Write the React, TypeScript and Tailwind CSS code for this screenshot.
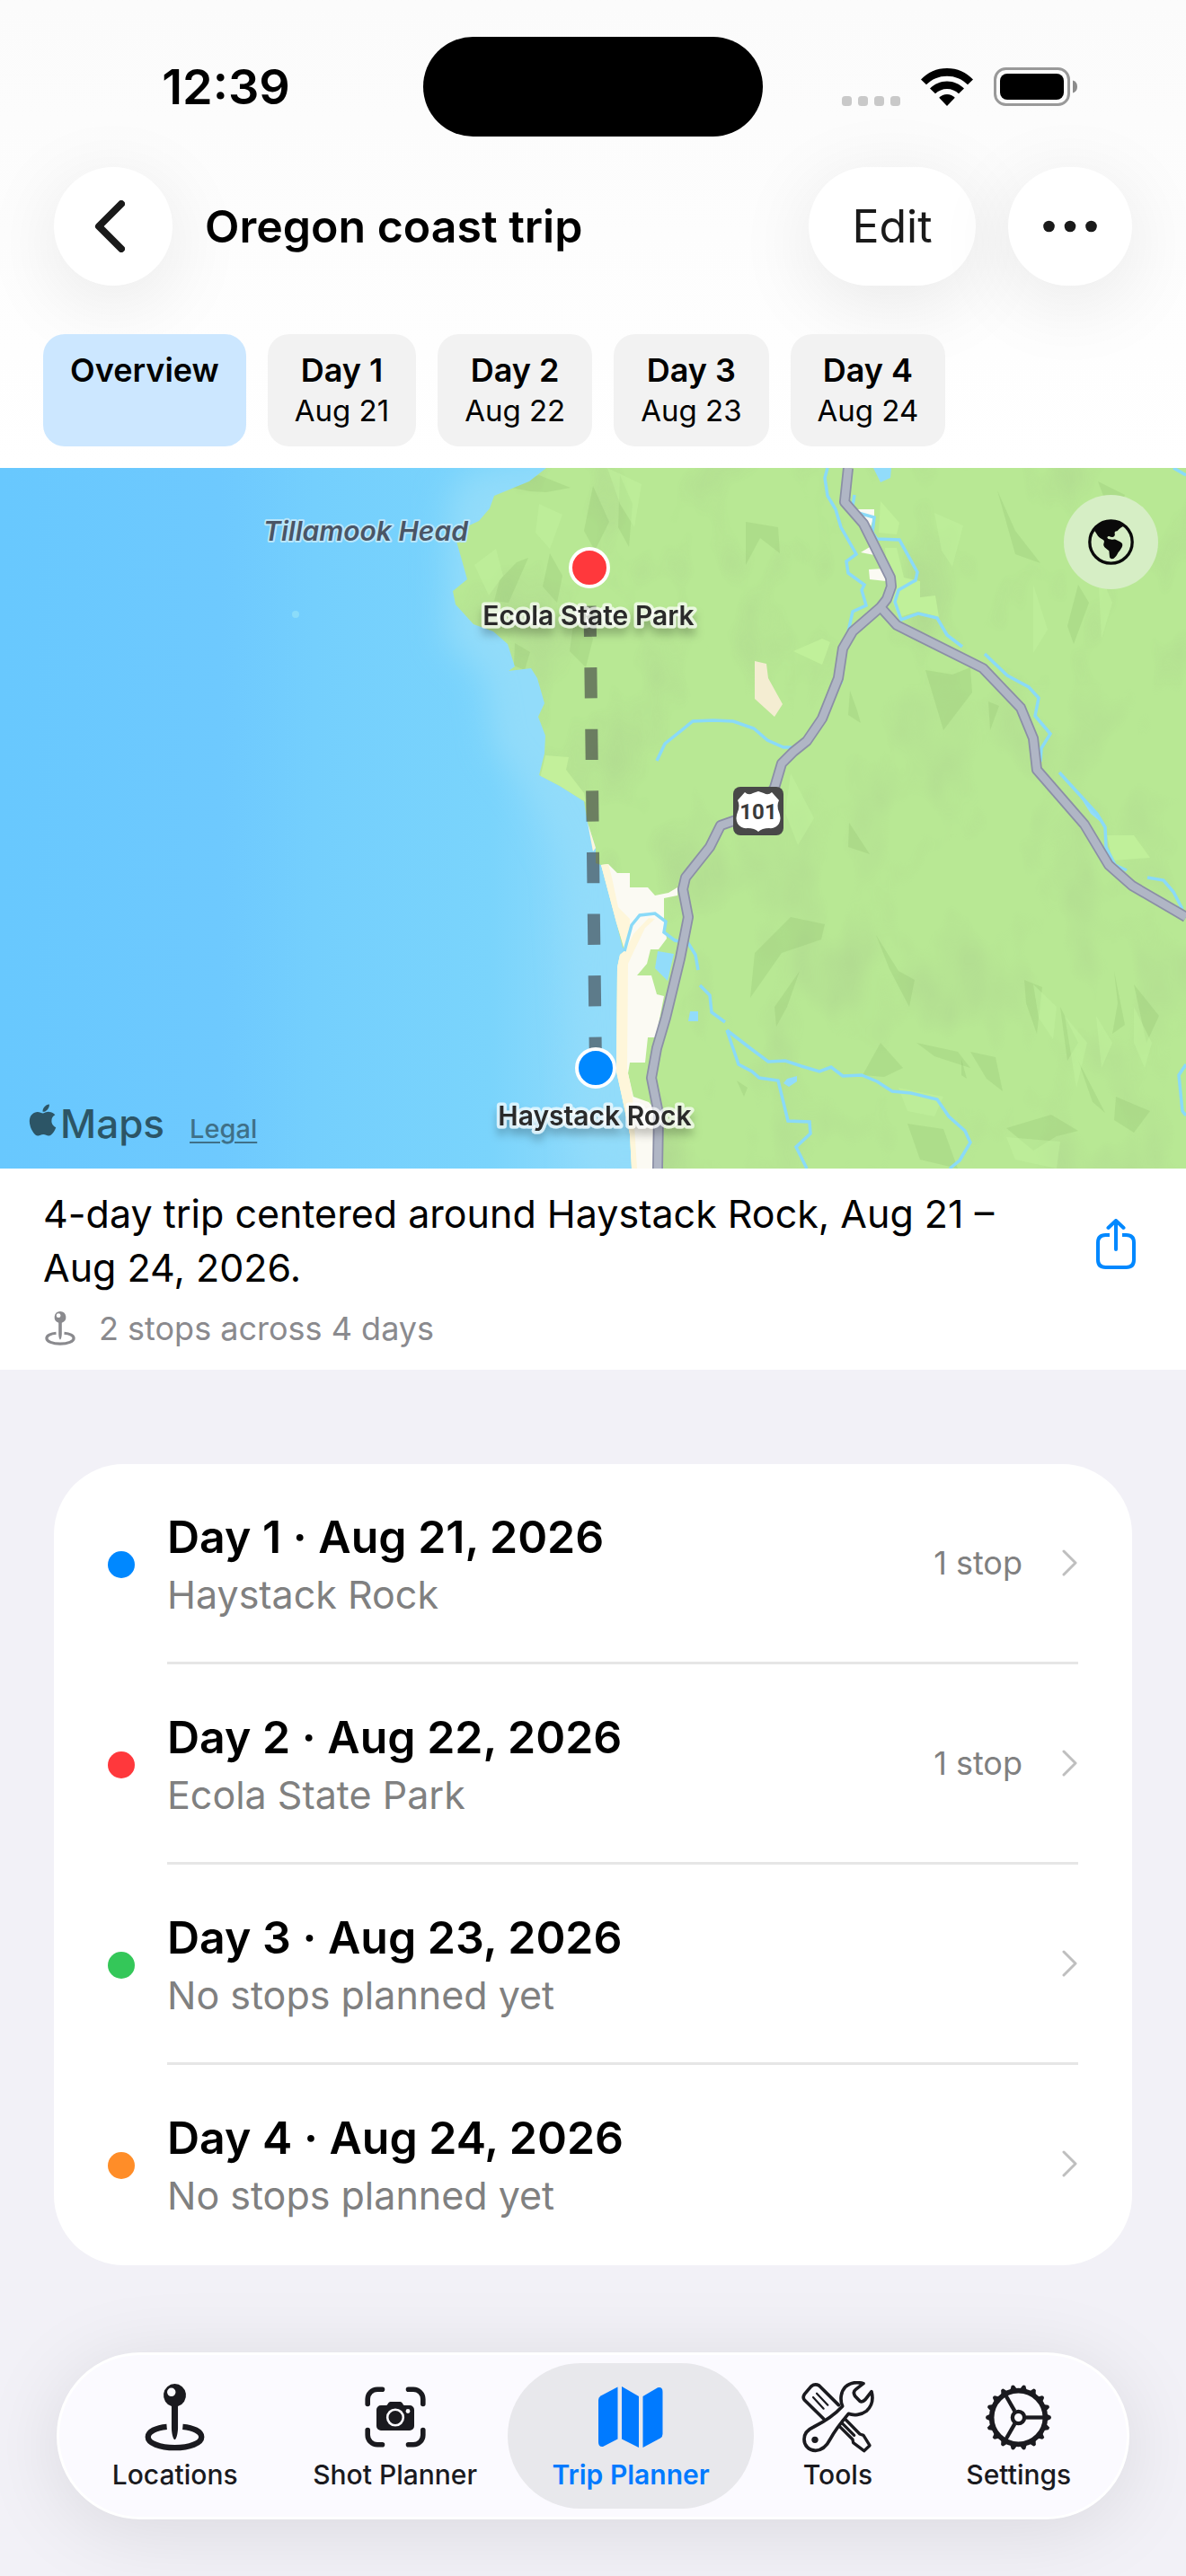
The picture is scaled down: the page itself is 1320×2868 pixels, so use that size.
import { useState } from 'react';
import type { ReactNode } from 'react';
import { FaApple } from 'react-icons/fa';

const days = [
  { id: 1, short: 'Aug 21', long: 'Aug 21, 2026', place: 'Haystack Rock', stops: '1 stop', dot: 'bg-[#0088ff]' },
  { id: 2, short: 'Aug 22', long: 'Aug 22, 2026', place: 'Ecola State Park', stops: '1 stop', dot: 'bg-[#ff383c]' },
  { id: 3, short: 'Aug 23', long: 'Aug 23, 2026', place: 'No stops planned yet', stops: '', dot: 'bg-[#34c759]' },
  { id: 4, short: 'Aug 24', long: 'Aug 24, 2026', place: 'No stops planned yet', stops: '', dot: 'bg-[#ff8d28]' },
];

function PinIcon({ className }: { className: string }) {
  return (
    <svg viewBox="0 0 68 76" className={className} fill="none" aria-hidden="true">
      <path fillRule="evenodd" clipRule="evenodd" d="M34 0a13 13 0 0 1 3.600 25.400V50c0 5-1.600 13-3.600 13s-3.600-8-3.600-13V25.400A13 13 0 0 1 34 0Zm-3.800 4.600a4.800 4.800 0 1 0 0 9.600a4.800 4.800 0 0 0 0-9.600Z" fill="currentColor" />
      <path d="M25 48.500C13 49.500 3.800 54 3.800 60C3.800 67 17 72.200 34 72.200S64.200 67 64.200 60C64.200 54 55 49.500 43 48.500" stroke="currentColor" strokeWidth="6.400" />
    </svg>
  );
}

function ViewfinderIcon() {
  return (
    <svg viewBox="0 0 68 68" className="h-[68px] w-[68px]" fill="none" aria-hidden="true">
      <path d="M19.500 3.200H14A10.800 10.800 0 0 0 3.200 14V19.500M48.500 3.200H54A10.800 10.800 0 0 1 64.800 14V19.500M3.200 48.500V54A10.800 10.800 0 0 0 14 64.800H19.500M64.800 48.500V54A10.800 10.800 0 0 1 54 64.800H48.500" stroke="currentColor" strokeWidth="5.600" strokeLinecap="round" />
      <path d="M18 21H24C25.500 21 26 17 28.500 17H39.500C42 17 42.500 21 44 21H50A5 5 0 0 1 55 26V44A5 5 0 0 1 50 49H18A5 5 0 0 1 13 44V26A5 5 0 0 1 18 21Z" fill="currentColor" />
      <circle cx="34" cy="34.500" r="8.800" stroke="#fbfaff" strokeWidth="2.600" />
      <circle cx="48" cy="27.500" r="2.400" fill="#fbfaff" />
    </svg>
  );
}

function MapIcon() {
  return (
    <svg viewBox="0 0 72 68" className="h-[68px] w-[72px]" fill="currentColor" aria-hidden="true">
      <path d="M21.500 0.500V58.500L5 67Q0 67.500 0 62V15Q0 12 2.500 10.500Z" />
      <path d="M26 0L45 11V68L26 58.500Z" />
      <path d="M49.500 11L66 1.200Q71.500 0 71.500 6V53Q71.500 56 69 57.500L49.500 68Z" />
    </svg>
  );
}

function ToolsIcon() {
  return (
    <svg viewBox="33 36 243 240" className="h-20 w-[81px]" fill="none" stroke="currentColor" strokeWidth="11" strokeLinejoin="round" strokeLinecap="round" aria-hidden="true">
      <path d="M107 162L43 99Q36 91 43 80L66 53Q78 44 92 51L157 116" />
      <path d="M72 90L107 128M84 77L121 116" strokeWidth="6.500" />
      <path d="M160 187L204 231L206 242L242 269L261 251L240 217L228 213L181 165M168 176L209 217" strokeWidth="10" />
      <path d="M190 145C168 171 146 198 129 230C119 250 106 267 80 268C56 267 42 250 42 230C42 210 56 197 74 189C112 170 140 153 170 120C161 98 164 72 180 55C195 42 218 38 240 44L214 64C206 70 207 78 212 86L228 103C235 107 241 103 246 98L267 71C274 98 267 121 250 136C233 149 208 152 190 145Z" />
      <circle cx="78" cy="232" r="11" fill="currentColor" stroke="none" />
    </svg>
  );
}

const teeth = Array.from({ length: 18 }, (_, i) => i * 20);

function GearIcon() {
  return (
    <svg viewBox="-113 -112 226 224" className="h-[75px] w-[75px]" fill="none" stroke="currentColor" aria-hidden="true">
      <circle r="90" strokeWidth="17" />
      <circle r="20" strokeWidth="13" />
      {teeth.map((deg) => (
        <path key={deg} d="M94 -12L108 -5Q112 0 108 5L94 12Z" fill="currentColor" stroke="none" transform={`rotate(${deg})`} />
      ))}
      {[0, 120, 240].map((deg) => (
        <path key={deg} d="M25 0H86" strokeWidth="13" transform={`rotate(${deg})`} />
      ))}
    </svg>
  );
}

function GlobeIcon() {
  return (
    <svg viewBox="93 99 153 153" className="h-[51px] w-[51px]" aria-hidden="true">
      <circle cx="169.500" cy="175.500" r="71" fill="none" stroke="#0a0a0a" strokeWidth="10" />
      <path d="M114 138C126 114 148 102 170 102C186 102 201 108 212 122L206 125C198 130 193 136 190 139C183 139 181 143 182 147C184 153 181 158 175 159L168 158C164 154 158 156 157 160C158 165 163 166 166 166C172 169 178 165 185 167L199 174C208 178 210 184 206 193L199 204C194 208 192 215 187 222L179 230C172 233 166 231 165 225L163 205C155 199 147 194 145 187C143 181 149 175 146 170C140 165 131 161 126 155C121 149 119 142 114 138Z" fill="#0a0a0a" />
    </svg>
  );
}

const land =
  'M608 0L589 15L550 31L545 45L533 59L518 66L507 78L513 99L520 124L504 137L507 152L527 174L549 182L565 196L573 221L566 226L591 223L598 234L606 262L599 277L607 298L606 318L600 342L623 354L650 371L654 395L663 423L663 440L669 442L686 506L693 534L696 537L690 542L687 556L686 672L692 699L701 742L703 780H1320V0Z';

const streams = [
  'M921 0L918 11L921 31L930 46L936 66L953 96L942 104L944 117L962 130L959 136L964 153L949 160L944 182L940 210L936 240',
  'M951 30L948 48L973 55L971 72L976 79L1001 80L1021 116L1019 125L1000 136L996 149L1003 169L1022 162L1043 167L1054 186L1071 199',
  'M1096 207L1121 231L1145 244L1156 256L1152 276L1169 296L1159 312L1158 327',
  'M1179 339L1199 361L1221 385L1230 400L1231 422L1241 442L1254 448',
  'M1277 456L1295 459L1306 472L1316 491',
  'M731 326L740 307L771 282L794 281L816 282L839 290L854 303L872 311L881 311',
  'M695 538L703 509L712 498L729 496L741 505L739 517L751 526L766 529L774 542L777 559M779 576L790 587L792 606L807 617',
  'M809 626L835 646L855 661L874 660L892 666L912 672L925 667L938 677L959 676L976 683L993 694L1014 696L1043 703L1056 722L1074 738L1080 751L1068 771L1057 780',
  'M809 626L822 664L837 672L845 679L866 682L877 727L901 728L902 741L886 756L898 780',
  'M1320 664L1312 676L1316 716L1320 721',
  'M1306 0L1320 8',
];

const roads = [
  'M980 155L998 175L1094 223L1136 267L1150 301L1154 336L1207 397L1234 442L1260 465L1320 500',
  'M944 0L940 38L961 62L991 122L992 132L987 146L980 155L949 182L938 201L933 234L915 279L898 304L883 316L870 329L862 356L842 384L802 398L790 422L763 456L760 469L766 500L757 546L741 612L731 646L725 679L733 719L732 780',
];

/* darker hillsides */
const slopes = [
  'M560 20L600 8L635 22L608 27L590 26Z',
  'M575 105L588 100L566 150L550 148L556 125Z',
  'M573 195L590 205L584 225L572 220Z',
  'M660 20L678 60L662 92L650 70Z',
  'M690 8L704 40L700 88L688 66Z',
  'M612 95L626 120L620 150L604 132Z',
  'M640 160L660 190L652 222L634 204Z',
  'M830 60L866 66L868 95L846 78L830 108Z',
  'M1110 25L1130 70L1158 106L1130 96Z',
  'M1222 15L1252 30L1248 40L1230 36Z',
  'M1200 130L1212 150L1195 196L1188 176Z',
  'M1030 225L1060 230L1080 222L1082 250L1050 292Z',
  'M946 248L954 270L958 284L944 275Z',
  'M1100 260L1112 265L1102 292Z',
  'M945 395L968 430L944 422Z',
  'M975 520L1000 560L1018 570L1012 600L990 558Z',
  'M840 540L880 500L918 508L914 525L870 540L835 590Z',
  'M890 560L876 600L864 622L862 600Z',
  'M1140 570L1160 578L1154 630L1142 596Z',
  'M1180 600L1200 640L1188 660Z',
  'M1240 560L1252 620L1238 630L1244 596Z',
  'M1262 575L1290 610L1276 640Z',
  'M1080 650L1108 656L1116 694L1098 680Z',
  'M1120 735L1170 720L1200 738L1176 744L1150 760Z',
  'M1200 660L1230 718L1216 706Z',
  'M1020 640L1066 650L1080 668L1040 655Z',
  'M980 640L1005 668L984 678L960 676Z',
  'M1010 730L1050 736L1066 780L1024 770Z',
  'M1242 700L1280 716L1262 740L1240 726Z',
  'M820 682L832 690L828 700Z',
  'M1070 658L1076 680L1070 676Z',
];

/* lit hillsides */
const crests = [
  'M676 0L714 18L706 66L690 40Z',
  'M528 108L552 90L560 120L544 142Z',
  'M600 40L626 52L612 90L596 72Z',
  'M1040 50L1072 64L1060 110L1048 92Z',
  'M1150 130L1166 180L1150 206Z',
  'M1222 112L1238 150L1226 190Z',
  'M880 340L906 390L888 420L874 384Z',
  'M1150 575L1176 600L1172 636L1156 612Z',
  'M1185 610L1210 640L1198 690Z',
  'M1262 600L1282 640L1274 668L1262 640Z',
  'M1220 610L1238 640L1226 668Z',
  'M1120 745L1180 750L1176 780L1130 770Z',
  'M1000 690L1050 700L1040 722L1010 716Z',
];

function TripMap() {
  return (
    <svg viewBox="0 0 1320 780" preserveAspectRatio="xMidYMid slice" className="block h-[780px] w-full font-['Inter',sans-serif]" role="img" aria-label="Map of the trip route">
      <defs>
        <linearGradient id="sea" x1="0" y1="0" x2="700" y2="0" gradientUnits="userSpaceOnUse">
          <stop offset="0" stopColor="#68c8fe" />
          <stop offset="0.350" stopColor="#6ec9fe" />
          <stop offset="0.500" stopColor="#74cffd" />
          <stop offset="0.780" stopColor="#7ad4fc" />
          <stop offset="0.950" stopColor="#90dbfb" />
        </linearGradient>
        <clipPath id="landClip">
          <path d={land} />
        </clipPath>
        <filter id="soft" x="-20%" y="-20%" width="140%" height="140%">
          <feGaussianBlur stdDeviation="18" />
        </filter>
        <filter id="relief" x="0" y="0" width="100%" height="100%">
          <feTurbulence type="fractalNoise" baseFrequency="0.013 0.008" numOctaves="3" seed="8" />
          <feColorMatrix type="matrix" values="0 0 0 0 0.350  0 0 0 0 0.480  0 0 0 0 0.250  2.200 0 0 0 -1.080" />
        </filter>
        <filter id="labelShadow" x="-10%" y="-40%" width="120%" height="220%">
          <feDropShadow dx="0" dy="8" stdDeviation="5" floodColor="#000" floodOpacity="0.250" />
        </filter>
      </defs>

      <rect width="1320" height="780" fill="url(#sea)" />
      <path d="M530 0L500 30L496 190L540 235L550 310L590 360L630 440L650 780H760V0Z" fill="#92dcfa" filter="url(#soft)" />
      <circle cx="329" cy="163" r="4" fill="#8bdcfa" />

      {/* Land */}
      <path d={land} fill="#b8e894" />
      <g clipPath="url(#landClip)">
        <rect x="500" width="820" height="780" filter="url(#relief)" opacity="0.300" />
        {slopes.map((d) => (
          <path key={d} d={d} fill="#87b568" opacity="0.220" />
        ))}
        {crests.map((d) => (
          <path key={d} d={d} fill="#c3f3a0" opacity="0.450" />
        ))}
        <path d="M607 320L633 322L630 336L650 362L652 372L600 350Z" fill="#c3f09b" />
        <path d="M980 37L1001 61L998 74L978 72ZM985 89L998 89L1006 122L1024 126L1024 144L1041 142L1045 166L1022 160L1000 166L990 140ZM1232 409L1262 409L1280 434L1238 437ZM883 204L915 190L924 194L915 219Z" fill="#c0f09a" />
        <path d="M840 215L853 218L855 234L871 263L862 277L840 257Z" fill="#f4edd2" />
        <path d="M954 46L973 46L973 54L968 68ZM967 113L983 112L986 126L968 124ZM958 94L968 88L973 97Z" fill="#fbfaf3" />
      </g>

      {/* Town and beach */}
      <path d="M669 442L677 441L687 451H701V467H721L729 476L744 473L754 467V476L739 479V502L742 524L733 536H724L720 552L709 565H725L731 586L739 588L730 634H721L718 662H701L699 674L705 700L722 706L729 714V780H703L701 742L692 699L686 672L687 556L690 542L696 537L686 506Z" fill="#fbfaf3" />
      <path d="M669 442L677 441L681 456L688 489L701 502V522L695 537L686 506ZM696 537L705 519L722 501L729 502L718 512L705 539L699 552L698 669L704 699L709 780H703L701 742L692 699L686 672L687 556L690 542ZM654 395L663 423L660 427Z" fill="#fef6da" />
      <path d="M732 538L750 541L743 571L729 557ZM768 605H777V616H766ZM876 680L887 677V683L878 689L872 685ZM972 0H992L991 11L980 16ZM1199 361L1224 388L1232 400L1214 385Z" fill="#92dcfa" />
      <g fill="none" stroke="#8adaf8" strokeWidth="3.500">
        {streams.map((d) => (
          <path key={d} d={d} />
        ))}
      </g>

      {/* Roads */}
      <g fill="none" strokeLinejoin="round">
        {roads.map((d) => (
          <path key={d} d={d} stroke="#8b8fa6" strokeWidth="12" />
        ))}
        {roads.map((d) => (
          <path key={d} d={d} stroke="#b0b6c5" strokeWidth="8.500" />
        ))}
      </g>

      {/* Route shield */}
      <rect x="816" y="355" width="56" height="54" rx="8" fill="#484848" />
      <path d="M829 361Q833 365 838 362L844 360L850 362Q855 365 859 361L867 370Q864 376 867 383Q870 390 867 396Q863 402 856 401Q848 401 844 405Q840 401 832 401Q825 402 821 396Q818 390 821 383Q824 376 821 370Z" fill="#fff" />
      <text x="844" y="391" textAnchor="middle" className="fill-[#3a3a3a] font-['Liberation_Sans_Narrow','Roboto',sans-serif] text-[24px] font-bold">101</text>

      {/* Route */}
      <path d="M663 668L656 111" stroke="#3a3a40" strokeOpacity="0.600" strokeWidth="14" strokeDasharray="34.300 34.300" />
      <circle cx="656" cy="111" r="21" fill="#ff383c" stroke="#fff" strokeWidth="4" />
      <circle cx="663" cy="668" r="21" fill="#0088ff" stroke="#fff" strokeWidth="4" />

      <g textAnchor="middle" strokeLinejoin="round" paintOrder="stroke">
        <text x="407" y="81" stroke="#b9e6fb" strokeWidth="4" className="fill-[#4a5566] text-[30px] font-semibold italic">Tillamook Head</text>
        <g stroke="#fff" strokeOpacity="0.700" strokeWidth="7" filter="url(#labelShadow)">
          <text x="655" y="175" className="fill-[#2c2c2c] text-[30px] font-semibold">Ecola State Park</text>
          <text x="662" y="732" className="fill-[#2c2c2c] text-[30px] font-semibold">Haystack Rock</text>
        </g>
      </g>
    </svg>
  );
}

function StatusBar() {
  return (
    <div className="grid grid-cols-[1fr_378px_1fr] pt-[41px]">
      <div className="flex items-center justify-center pl-8 text-[54px] leading-[60px] font-semibold">12:39</div>
      <div className="h-[111px] rounded-full bg-black" />
      <div className="flex items-center justify-center gap-[23px] pr-8">
        <svg viewBox="0 0 65 42" className="h-[42px] w-[65px] fill-[#c9c9c9]" aria-hidden="true">
          {[0, 18, 36, 54].map((x) => (
            <rect key={x} x={x} y="31" width="11" height="11" rx="3.500" />
          ))}
        </svg>
        <svg viewBox="0 0 58 42" className="h-[42px] w-[58px]" aria-hidden="true">
          <path d="M29 0C40.500 0 50.500 4.500 58 12.500L52 18.300C46 12 38 8.700 29 8.700S12 12 6 18.300L0 12.500C7.500 4.500 17.500 0 29 0Z" />
          <path d="M29 14.500C36.500 14.500 43 17.500 48 22.600L42 28.300C38.500 25 34 23 29 23S19.500 25 16 28.300L10 22.600C15 17.500 21.500 14.500 29 14.500Z" />
          <path d="M29 29C32.500 29 35.500 30.300 37.800 32.800L29 42L20.200 32.800C22.500 30.300 25.500 29 29 29Z" />
        </svg>
        <svg viewBox="0 0 94 43" className="h-[43px] w-[94px]" aria-hidden="true">
          <rect x="1.500" y="1.500" width="82" height="40" rx="12" fill="none" stroke="#999" strokeWidth="3" />
          <rect x="7" y="7" width="71" height="29" rx="8" />
          <path d="M88 14.500Q93 16 93 21.500T88 28.500Z" fill="#8c8c8c" />
        </svg>
      </div>
    </div>
  );
}

function TabLink({ label, active, children }: { label: string; active?: boolean; children: ReactNode }) {
  return (
    <a
      href="#"
      aria-current={active ? 'page' : undefined}
      className={`flex flex-col items-center rounded-full py-5 ${active ? 'bg-[#e8e8ec] font-semibold text-[#007aff]' : 'font-medium'}`}
    >
      <span className="flex h-20 items-center">{children}</span>
      <span className="mt-1.5 text-[30px] leading-[36px] whitespace-nowrap">{label}</span>
    </a>
  );
}

export default function App() {
  const [selected, setSelected] = useState(0);

  return (
    <div className="flex min-h-screen flex-col bg-[#f2f1f7] font-['Inter',sans-serif] text-black">
      {/* Header */}
      <header className="bg-linear-to-b from-[#fbfbfb] to-white pb-6">
        <StatusBar />
        <div className="mt-[34px] flex items-center px-[60px]">
          <button type="button" aria-label="Back" className="flex h-[132px] w-[132px] items-center justify-center rounded-full bg-white shadow-[0_18px_90px_rgba(0,0,0,0.09)]">
            <svg viewBox="0 0 34 58" className="mr-2 h-[58px] w-[34px]" fill="none" stroke="#1a1a1a" strokeWidth="8" strokeLinecap="round" strokeLinejoin="round" aria-hidden="true">
              <path d="M30 4L5 29L30 54" />
            </svg>
          </button>
          <h1 className="ml-9 flex-1 text-[50px] leading-[60px] font-semibold">Oregon coast trip</h1>
          <button type="button" className="h-[132px] w-[186px] rounded-full bg-white text-[50px] text-[#1a1a1a] shadow-[0_18px_90px_rgba(0,0,0,0.09)]">
            Edit
          </button>
          <button type="button" aria-label="More" className="ml-9 flex h-[132px] w-[138px] items-center justify-center rounded-full bg-white shadow-[0_18px_90px_rgba(0,0,0,0.09)]">
            <svg viewBox="0 0 60 14" className="h-[14px] w-[60px] fill-[#1a1a1a]" aria-hidden="true">
              <circle cx="6.500" cy="7" r="6.300" />
              <circle cx="30" cy="7" r="6.300" />
              <circle cx="53.500" cy="7" r="6.300" />
            </svg>
          </button>
        </div>

        {/* Day picker */}
        <div className="mt-[54px] flex gap-6 px-12">
          <button
            type="button"
            onClick={() => setSelected(0)}
            className={`flex flex-col rounded-3xl px-[30px] pt-4 pb-[18px] ${selected === 0 ? 'bg-[#cce7ff]' : 'bg-[#f2f2f2]'}`}
          >
            <span className="text-[36px] leading-[48px] font-semibold">Overview</span>
          </button>
          {days.map((day) => (
            <button
              key={day.id}
              type="button"
              onClick={() => setSelected(day.id)}
              className={`flex flex-col items-center rounded-3xl px-[30px] pt-4 pb-[18px] ${selected === day.id ? 'bg-[#cce7ff]' : 'bg-[#f2f2f2]'}`}
            >
              <span className="text-[36px] leading-[48px] font-semibold">Day {day.id}</span>
              <span className="text-[33px] leading-[43px]">{day.short}</span>
            </button>
          ))}
        </div>
      </header>

      {/* Map */}
      <section className="relative">
        <TripMap />
        <button type="button" aria-label="Change map style" className="absolute top-[30px] right-[31px] flex h-[105px] w-[105px] items-center justify-center rounded-full bg-[#d6eec5]">
          <GlobeIcon />
        </button>
        <div className="absolute bottom-5 left-8 flex items-baseline">
          <FaApple className="h-10 w-[31px] text-[#2c5566]" />
          <span className="ml-1 text-[44px] leading-[60px] font-medium text-[#2c5566]">Maps</span>
          <a href="#" className="ml-7 text-[29px] font-medium text-[#3f7088] underline decoration-2 underline-offset-4">
            Legal
          </a>
        </div>
      </section>

      {/* Summary */}
      <section className="flex items-start bg-white px-12 pt-5 pb-[22px]">
        <div className="flex-1">
          <p className="text-[43px] leading-[60px]">
            4-day trip centered around Haystack Rock, Aug 21 –<br />
            Aug 24, 2026.
          </p>
          <p className="mt-3.5 flex items-center gap-6 text-[36px] leading-[48px] text-[#8a8a8e]">
            <PinIcon className="h-[38px] w-[38px]" />
            2 stops across 4 days
          </p>
        </div>
        <button type="button" aria-label="Share" className="mt-9 mr-2 text-[#0088ff]">
          <svg viewBox="0 0 44 56" className="h-14 w-11" fill="none" stroke="currentColor" strokeWidth="4" strokeLinecap="round" strokeLinejoin="round" aria-hidden="true">
            <path d="M22 34V3M13.500 10L22 2L30.500 10" />
            <path d="M15 18H10.500Q2 18 2 26.500V45.500Q2 54 10.500 54H33.500Q42 54 42 45.500V26.500Q42 18 33.500 18H29" strokeLinecap="butt" />
          </svg>
        </button>
      </section>

      {/* Days */}
      <ul className="mx-[60px] mt-[105px] mb-12 rounded-[78px] bg-white px-[60px]">
        {days.map((day, i) => (
          <li key={day.id}>
            <a href="#" className="flex items-center">
              <span className={`h-[30px] w-[30px] shrink-0 rounded-full ${day.dot}`} />
              <span className={`ml-9 flex flex-1 items-center border-b-[3px] py-[45px] ${i < days.length - 1 ? 'border-[#e6e6e6]' : 'border-transparent'}`}>
                <span className="flex-1 pt-1.5">
                  <span className="block text-[50px] leading-[60px] font-semibold">
                    Day {day.id} · {day.long}
                  </span>
                  <span className="mt-1 block text-[43px] leading-[60px] text-[#808080]">{day.place}</span>
                </span>
                <span className="text-[36px] leading-[48px] text-[#808080]">{day.stops}</span>
                <svg viewBox="0 0 18 30" className="ml-11 h-[30px] w-[18px]" fill="none" stroke="#bfbfbf" strokeWidth="3" strokeLinecap="round" strokeLinejoin="round" aria-hidden="true">
                  <path d="M2 2L15 15L2 28" />
                </svg>
              </span>
            </a>
          </li>
        ))}
      </ul>

      {/* Tab bar */}
      <nav className="mx-[63px] mt-auto mb-[63px] grid grid-cols-[239fr_250fr_274fr_186fr_216fr] rounded-full border-[3px] border-white bg-[#fbfaff] py-[9px] pr-3 pl-[9px] text-[#1a1a1f] shadow-[0_12px_90px_rgba(0,0,0,0.1)]">
        <TabLink label="Locations">
          <PinIcon className="h-[75px] w-[67px]" />
        </TabLink>
        <TabLink label="Shot Planner">
          <ViewfinderIcon />
        </TabLink>
        <TabLink label="Trip Planner" active>
          <MapIcon />
        </TabLink>
        <TabLink label="Tools">
          <ToolsIcon />
        </TabLink>
        <TabLink label="Settings">
          <GearIcon />
        </TabLink>
      </nav>
    </div>
  );
}
